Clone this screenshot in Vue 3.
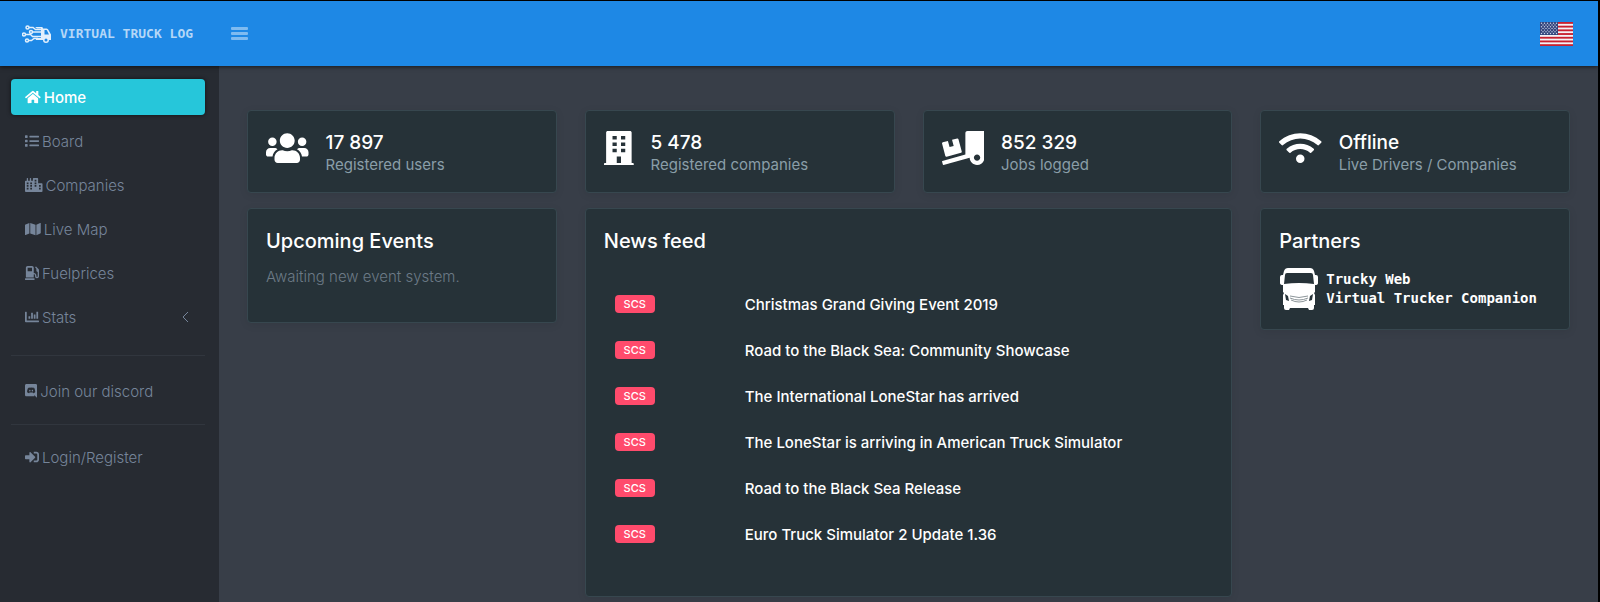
<template>
  <div class="app">
    <header class="topbar">
      <a href="#" class="brand">
        <svg class="brand-logo" viewBox="0 0 60 36" aria-hidden="true">
          <g fill="none" stroke="currentColor" stroke-width="3">
            <path d="M14 5h8l5 4h12M20 14h19M8 19h9l4 4h19M14 31h5l5-4h8" />
            <circle cx="11" cy="5" r="3" />
            <circle cx="18" cy="14" r="3" />
            <circle cx="4" cy="19" r="3" />
            <circle cx="10" cy="31" r="3" />
          </g>
          <path
            fill="currentColor"
            fill-rule="evenodd"
            d="M26 4h14q2 0 2 3h7q3 0 4 3l5 9v11h-4a6 6 0 0 1-12 0H28v-4h10V7H30zM45 10v9h9l-4-8-1-1zM48 27a3 3 0 1 0 0 6 3 3 0 1 0 0-6z"
          />
        </svg>
        <span class="brand-name">VIRTUAL TRUCK LOG</span>
      </a>
      <button type="button" class="menu-toggle" aria-label="Toggle menu" @click="collapsed = !collapsed">
        <span></span>
        <span></span>
        <span></span>
      </button>
      <button type="button" class="language" aria-label="Language">
        <svg viewBox="0 0 33 24" aria-hidden="true">
          <rect width="33" height="24" fill="#f4f2f6" />
          <rect v-for="n in 7" :key="n" :y="(n - 1) * 3.7" width="33" height="1.85" fill="#c8202f" />
          <rect width="18" height="13" fill="#33457c" />
          <g fill="#c9d0e2">
            <circle v-for="star in stars" :key="star.id" :cx="star.x" :cy="star.y" r="0.7" />
          </g>
        </svg>
      </button>
    </header>

    <div class="body">
      <nav v-show="!collapsed" class="sidebar">
        <ul>
          <li v-for="item in menu" :key="item.text" :class="item.divider">
            <a href="#" class="nav-link" :class="{ active: item.active }">
              <svg class="nav-icon" :viewBox="icons[item.icon].box" aria-hidden="true">
                <path fill-rule="evenodd" :d="icons[item.icon].path" />
              </svg>
              <span>{{ item.text }}</span>
              <svg v-if="item.children" class="chevron" viewBox="0 0 8 12" aria-hidden="true">
                <path d="M7 1L2 6l5 5" />
              </svg>
            </a>
          </li>
        </ul>
      </nav>

      <main class="content">
        <section v-for="stat in stats" :key="stat.label" class="card stat">
          <svg class="stat-icon" :viewBox="icons[stat.icon].box" aria-hidden="true">
            <path fill-rule="evenodd" :d="icons[stat.icon].path" />
          </svg>
          <div>
            <p class="stat-value">{{ stat.value }}</p>
            <p class="stat-label">{{ stat.label }}</p>
          </div>
        </section>

        <section class="card events">
          <h2>Upcoming Events</h2>
          <p>Awaiting new event system.</p>
        </section>

        <section class="card news">
          <h2>News feed</h2>
          <table>
            <tbody>
              <tr v-for="title in news" :key="title">
                <td class="source"><span class="badge">SCS</span></td>
                <td><a href="#">{{ title }}</a></td>
              </tr>
            </tbody>
          </table>
        </section>

        <section class="card partners">
          <h2>Partners</h2>
          <a href="#" class="partner">
            <svg viewBox="0 0 38 42" aria-hidden="true">
              <path
                fill-rule="evenodd"
                d="M8 0h22q3 0 4 3l1 4h1q2 0 2 2v6q0 2-3 2v7l-1 1 1 2v10h-1v3q0 2-2 2h-3l-1-2H10l-1 2H6q-2 0-2-2v-3H3V27l1-2-1-1v-7q-3 0-3-2V9q0-2 2-2h1l1-4q1-3 4-3zM7 5Q5 5 5 7L4 16q15-2 30 0L33 7q0-2-2-2zM5 26l3 2 1 5-3-1zM33 26l-3 2-1 5 3-1z"
              />
              <path class="grille" d="M10 28q9 3 18 0M10 30q9 4 18 0M11 32q8 4 16 0" />
            </svg>
            <span>Trucky Web<br />Virtual Trucker Companion</span>
          </a>
        </section>
      </main>
    </div>
  </div>
</template>

<script setup>
import { ref } from 'vue'

const collapsed = ref(false)

const menu = [
  { text: 'Home', icon: 'home', active: true },
  { text: 'Board', icon: 'list' },
  { text: 'Companies', icon: 'city' },
  { text: 'Live Map', icon: 'map' },
  { text: 'Fuelprices', icon: 'fuel' },
  { text: 'Stats', icon: 'chart', children: true },
  { text: 'Join our discord', icon: 'discord', divider: 'divider' },
  { text: 'Login/Register', icon: 'login', divider: 'divider compact' }
]

const stats = [
  { value: '17 897', label: 'Registered users', icon: 'users' },
  { value: '5 478', label: 'Registered companies', icon: 'building' },
  { value: '852 329', label: 'Jobs logged', icon: 'loading' },
  { value: 'Offline', label: 'Live Drivers / Companies', icon: 'wifi' }
]

const news = [
  'Christmas Grand Giving Event 2019',
  'Road to the Black Sea: Community Showcase',
  'The International LoneStar has arrived',
  'The LoneStar is arriving in American Truck Simulator',
  'Road to the Black Sea Release',
  'Euro Truck Simulator 2 Update 1.36'
]

// rows alternate between six and five stars
const stars = []
for (let row = 0; row < 7; row++) {
  const count = row % 2 ? 5 : 6
  for (let col = 0; col < count; col++) {
    stars.push({
      id: `${row}-${col}`,
      x: (row % 2 ? 3 : 1.5) + col * 3,
      y: 1.3 + row * 1.7
    })
  }
}

const icons = {
  home: {
    box: '0 0 576 512',
    path: 'M280.37 148.26L96 300.11V464a16 16 0 0 0 16 16l112.06-.29a16 16 0 0 0 15.92-16V368a16 16 0 0 1 16-16h64a16 16 0 0 1 16 16v95.64a16 16 0 0 0 16 16.05L464 480a16 16 0 0 0 16-16V300L295.67 148.26a12.19 12.19 0 0 0-15.3 0zM571.6 251.47L488 182.56V44.05a12 12 0 0 0-12-12h-56a12 12 0 0 0-12 12v72.61L318.47 43a48 48 0 0 0-61 0L4.34 251.47a12 12 0 0 0-1.6 16.9l25.5 31A12 12 0 0 0 45.15 301l235.22-193.74a12.19 12.19 0 0 1 15.3 0L530.9 301a12 12 0 0 0 16.9-1.6l25.5-31a12 12 0 0 0-1.7-16.93z'
  },
  list: {
    box: '0 0 512 512',
    path: 'M80 368H16a16 16 0 0 0-16 16v64a16 16 0 0 0 16 16h64a16 16 0 0 0 16-16v-64a16 16 0 0 0-16-16zm0-320H16A16 16 0 0 0 0 64v64a16 16 0 0 0 16 16h64a16 16 0 0 0 16-16V64a16 16 0 0 0-16-16zm0 160H16a16 16 0 0 0-16 16v64a16 16 0 0 0 16 16h64a16 16 0 0 0 16-16v-64a16 16 0 0 0-16-16zm416 176H176a16 16 0 0 0-16 16v32a16 16 0 0 0 16 16h320a16 16 0 0 0 16-16v-32a16 16 0 0 0-16-16zm0-320H176a16 16 0 0 0-16 16v32a16 16 0 0 0 16 16h320a16 16 0 0 0 16-16V80a16 16 0 0 0-16-16zm0 160H176a16 16 0 0 0-16 16v32a16 16 0 0 0 16 16h320a16 16 0 0 0 16-16v-32a16 16 0 0 0-16-16z'
  },
  city: {
    box: '0 0 640 512',
    path: 'M616 192H480V24c0-13.26-10.74-24-24-24H312c-13.26 0-24 10.74-24 24v72h-64V16c0-8.84-7.16-16-16-16h-16c-8.84 0-16 7.16-16 16v80h-64V16c0-8.84-7.16-16-16-16H80c-8.84 0-16 7.16-16 16v80H24c-13.26 0-24 10.74-24 24v360c0 17.67 14.33 32 32 32h576c17.67 0 32-14.33 32-32V216c0-13.26-10.75-24-24-24zM64 160h64v64H64zM64 256h64v64H64zM64 352h64v64H64zM192 160h64v64h-64zM192 256h64v64h-64zM192 352h64v64h-64zM352 64h64v64h-64zM352 160h64v64h-64zM352 256h64v64h-64zM512 256h64v64h-64zM512 352h64v64h-64z'
  },
  map: {
    box: '0 0 576 512',
    path: 'M0 117.66v346.32c0 11.32 11.43 19.06 21.94 14.86L160 416V32L20.12 87.95A32.006 32.006 0 0 0 0 117.66zM192 416l192 64V96L192 32v384zM554.06 33.16L416 96v384l139.88-55.95A31.996 31.996 0 0 0 576 394.34V48.02c0-11.32-11.43-19.06-21.94-14.86z'
  },
  fuel: {
    box: '0 0 512 512',
    path: 'M336 448H16c-8.8 0-16 7.2-16 16v32c0 8.8 7.2 16 16 16h320c8.8 0 16-7.2 16-16v-32c0-8.8-7.2-16-16-16zm157.2-340.7l-81-81c-6.2-6.2-16.4-6.2-22.6 0l-11.3 11.3c-6.2 6.2-6.2 16.4 0 22.6L416 97.9V160c0 28.1 20.9 51.3 48 55.2V376c0 13.2-10.8 24-24 24s-24-10.8-24-24v-32c0-48.6-39.4-88-88-88h-8V64c0-35.3-28.7-64-64-64H96C60.7 0 32 28.7 32 64v352h288V304h8c22.1 0 40 17.9 40 40v27.8c0 37.7 27 72 64.5 75.9 43 4.3 79.5-29.5 79.5-71.7V152.6c0-17-6.8-33.3-18.8-45.3zM256 192H96V64h160v128z'
  },
  chart: {
    box: '0 0 512 512',
    path: 'M332.8 320h38.4c6.4 0 12.8-6.4 12.8-12.8V172.8c0-6.4-6.4-12.8-12.8-12.8h-38.4c-6.4 0-12.8 6.4-12.8 12.8v134.4c0 6.4 6.4 12.8 12.8 12.8zm96 0h38.4c6.4 0 12.8-6.4 12.8-12.8V76.8c0-6.4-6.4-12.8-12.8-12.8h-38.4c-6.4 0-12.8 6.4-12.8 12.8v230.4c0 6.4 6.4 12.8 12.8 12.8zm-288 0h38.4c6.4 0 12.8-6.4 12.8-12.8v-70.4c0-6.4-6.4-12.8-12.8-12.8h-38.4c-6.4 0-12.8 6.4-12.8 12.8v70.4c0 6.4 6.4 12.8 12.8 12.8zm96 0h38.4c6.4 0 12.8-6.4 12.8-12.8V108.8c0-6.4-6.4-12.8-12.8-12.8h-38.4c-6.4 0-12.8 6.4-12.8 12.8v198.4c0 6.4 6.4 12.8 12.8 12.8zM496 384H64V80c0-8.84-7.16-16-16-16H16C7.16 64 0 71.16 0 80v336c0 17.67 14.33 32 32 32h464c8.84 0 16-7.16 16-16v-32c0-8.84-7.16-16-16-16z'
  },
  discord: {
    box: '0 0 448 512',
    path: 'M297.216 243.2c0 15.616-11.52 28.416-26.112 28.416-14.336 0-26.112-12.8-26.112-28.416s11.52-28.416 26.112-28.416c14.592 0 26.112 12.8 26.112 28.416zm-119.552-28.416c-14.592 0-26.112 12.8-26.112 28.416s11.776 28.416 26.112 28.416c14.592 0 26.112-12.8 26.112-28.416.256-15.616-11.52-28.416-26.112-28.416zM448 52.736V512c-64.494-56.994-43.868-38.128-118.784-107.776l13.568 47.36H52.48C23.552 451.584 0 428.032 0 398.848V52.736C0 23.552 23.552 0 52.48 0h343.04C424.448 0 448 23.552 448 52.736zm-72.96 242.688c0-82.432-36.864-149.248-36.864-149.248-36.864-27.648-71.936-26.88-71.936-26.88l-3.584 4.096c43.52 13.312 63.744 32.512 63.744 32.512-60.811-33.329-132.244-33.335-191.232-7.424-9.472 4.352-15.104 7.424-15.104 7.424s21.248-20.224 67.328-33.536l-2.56-3.072s-35.072-.768-71.936 26.88c0 0-36.864 66.816-36.864 149.248 0 0 21.504 37.12 78.08 38.912 0 0 9.472-11.52 17.152-21.248-32.512-9.728-44.8-30.208-44.8-30.208 3.766 2.636 9.976 6.053 10.496 6.4 43.21 24.198 104.588 32.126 159.744 8.96 8.96-3.328 18.944-8.192 29.44-15.104 0 0-12.8 20.992-46.336 30.464 7.68 9.728 16.896 20.736 16.896 20.736 56.576-1.792 78.336-38.912 78.336-38.912z'
  },
  login: {
    box: '0 0 512 512',
    path: 'M416 448h-84c-6.6 0-12-5.4-12-12v-40c0-6.6 5.4-12 12-12h84c17.7 0 32-14.3 32-32V160c0-17.7-14.3-32-32-32h-84c-6.6 0-12-5.4-12-12V76c0-6.6 5.4-12 12-12h84c53 0 96 43 96 96v192c0 53-43 96-96 96zm-47-201L201 79c-15-15-41-4.5-41 17v96H24c-13.3 0-24 10.7-24 24v96c0 13.3 10.7 24 24 24h136v96c0 21.5 26 32 41 17l168-168c9.3-9.4 9.3-24.6 0-34z'
  },
  users: {
    box: '0 0 640 512',
    path: 'M96 224c35.3 0 64-28.7 64-64s-28.7-64-64-64-64 28.7-64 64 28.7 64 64 64zm448 0c35.3 0 64-28.7 64-64s-28.7-64-64-64-64 28.7-64 64 28.7 64 64 64zm32 32h-64c-17.6 0-33.5 7.1-45.1 18.6 40.3 22.1 68.9 62 75.1 109.4h66c17.7 0 32-14.3 32-32v-32c0-35.3-28.7-64-64-64zm-256 0c61.9 0 112-50.1 112-112S381.9 32 320 32 208 82.1 208 144s50.1 112 112 112zm76.8 32h-8.3c-20.8 10-43.9 16-68.5 16s-47.6-6-68.5-16h-8.3C179.6 288 128 339.6 128 403.2V432c0 26.5 21.5 48 48 48h288c26.5 0 48-21.5 48-48v-28.8c0-63.6-51.6-115.2-115.2-115.2zm-223.7-13.4C161.5 263.1 145.6 256 128 256H64c-35.3 0-64 28.7-64 64v32c0 17.7 14.3 32 32 32h65.9c6.3-47.4 34.9-87.3 75.2-109.4z'
  },
  building: {
    box: '0 0 448 512',
    path: 'M436 480h-20V24c0-13.255-10.745-24-24-24H56C42.745 0 32 10.745 32 24v456H12c-6.627 0-12 5.373-12 12v20h448v-20c0-6.627-5.373-12-12-12zM128 76h64v52h-64zM256 76h64v52h-64zM128 172h64v52h-64zM256 172h64v52h-64zM128 268h64v52h-64zM256 268h64v52h-64zM192 384h64v96h-64z'
  },
  loading: {
    box: '0 0 640 512',
    path: 'M50.2 375.6c2.3 8.5 11.1 13.6 19.6 11.3l216.4-58c8.5-2.3 13.6-11.1 11.3-19.6l-49.7-185.5c-2.3-8.5-11.1-13.6-19.6-11.3L151 133.3l24.8 92.7-61.8 16.5-24.8-92.7-77.3 20.7C3.4 172.8-1.7 181.6.6 190.1l49.6 185.5zM384 0c-17.7 0-32 14.3-32 32v323.6L5.9 450c-4.3 1.2-6.8 5.6-5.6 9.8l12.6 46.3c1.2 4.3 5.6 6.8 9.8 5.6l393.7-107.4C418.8 464.1 467.6 512 528 512c61.9 0 112-50.1 112-112V0H384zm144 448c-26.5 0-48-21.5-48-48s21.5-48 48-48 48 21.5 48 48-21.5 48-48 48z'
  },
  wifi: {
    box: '0 0 640 512',
    path: 'M634.91 154.88C457.74-8.99 182.19-8.93 5.09 154.88c-6.66 6.16-6.79 16.59-.35 22.98l34.24 33.97c6.14 6.1 16.02 6.23 22.4.38 145.92-133.68 371.3-133.71 517.25 0 6.38 5.85 16.26 5.71 22.4-.38l34.24-33.97c6.43-6.39 6.3-16.82-.36-22.98zM320 352c-35.35 0-64 28.65-64 64s28.65 64 64 64 64-28.65 64-64-28.65-64-64-64zm202.67-83.59c-115.26-101.93-290.21-101.82-405.34 0-6.9 6.1-7.12 16.69-.57 23.15l34.44 33.99c6 5.92 15.66 6.32 22.05.8 83.95-72.57 209.74-72.41 293.49 0 6.39 5.52 16.05 5.13 22.05-.8l34.44-33.99c6.56-6.46 6.33-17.06-.56-23.15z'
  }
}
</script>

<style>
body {
  margin: 0;
  background: #383e48;
}
</style>

<style scoped>
.app {
  box-sizing: border-box;
  min-height: 100vh;
  display: flex;
  flex-direction: column;
  border-top: 1px solid #000;
  border-right: 2px solid #000;
  font-family: Inter, "Noto Sans", sans-serif;
  font-size: 15px;
  color: #fff;
}

.app *,
.app *::before {
  box-sizing: border-box;
}

h2,
p,
ul {
  margin: 0;
  padding: 0;
}

a {
  color: inherit;
  text-decoration: none;
}

button {
  padding: 0;
  border: none;
  background: none;
  cursor: pointer;
}

svg {
  display: block;
  flex: none;
  fill: currentColor;
}

.topbar {
  position: relative;
  z-index: 1;
  display: flex;
  align-items: center;
  height: 65px;
  padding: 0 25px 0 22px;
  background: #1e88e5;
  box-shadow: 0 1px 4px rgba(0, 0, 0, 0.6);
}

.brand {
  display: flex;
  align-items: center;
  gap: 8px;
  color: #b4d7f7;
}

.brand-logo {
  width: 30px;
  height: 18px;
  color: #e2effc;
}

.brand-name {
  font-family: "DejaVu Sans Mono", monospace;
  font-size: 13px;
  font-weight: 700;
}

.menu-toggle {
  display: grid;
  gap: 2px;
  width: 17px;
  margin-left: 38px;
}

.menu-toggle span {
  height: 3px;
  border-radius: 1px;
  background: #7fbbf0;
}

.language {
  margin-left: auto;
}

.language svg {
  width: 33px;
  height: 24px;
}

.body {
  flex: 1;
  display: flex;
}

.sidebar {
  flex: none;
  width: 219px;
  padding: 13px 14px 14px 11px;
  background: #272b32;
}

.sidebar ul {
  display: grid;
  gap: 8px;
  list-style: none;
}

.divider {
  margin-top: 12px;
  padding-top: 17px;
  border-top: 1px solid #31363e;
}

.divider.compact {
  margin-top: 7px;
  padding-top: 14px;
}

.nav-link {
  display: flex;
  align-items: center;
  gap: 3px;
  height: 36px;
  padding: 0 16px 0 14px;
  border-radius: 4px;
  font-weight: 300;
  color: #76859a;
}

.nav-link.active {
  background: #26c6da;
  box-shadow: 0 0 4px rgba(0, 0, 0, 0.6);
  font-weight: 500;
  color: #fff;
}

.nav-icon {
  height: 14px;
}

.chevron {
  width: 8px;
  height: 12px;
  margin-left: auto;
  fill: none;
  stroke: currentColor;
}

.content {
  flex: 1;
  display: grid;
  grid-template-columns: repeat(4, minmax(0, 1fr));
  align-content: start;
  align-items: start;
  gap: 15px 28px;
  padding: 44px 28px 5px;
  background: #383e48;
}

.card {
  padding: 18px 18px 19px;
  border: 1px solid #37474f;
  border-radius: 4px;
  background: #263238;
  box-shadow: 0 2px 8px rgba(0, 0, 0, 0.08);
}

.card h2 {
  font-size: 20px;
  font-weight: 500;
  line-height: 28px;
}

.stat {
  display: flex;
  gap: 17px;
}

.stat-icon {
  height: 34px;
  margin-top: 2px;
}

.stat-value {
  font-size: 19px;
  font-weight: 500;
  line-height: 28px;
}

.stat-label {
  font-size: 15px;
  line-height: 16px;
  color: #8a9ea8;
}

.events p {
  margin: 12px 0 16px;
  font-size: 15px;
  font-weight: 300;
  line-height: 20px;
  color: #6c7a86;
}

.news {
  grid-column: span 2;
}

.news table {
  width: 100%;
  margin: 26px 0 20px;
  border-collapse: collapse;
}

.news td {
  height: 46px;
  padding: 0 11px;
  font-size: 15px;
  font-weight: 500;
}

.news .source {
  width: 130px;
}

.badge {
  display: block;
  width: 40px;
  border-radius: 4px;
  background: #ff4b6c;
  font-size: 11px;
  line-height: 18px;
  text-align: center;
}

.partner {
  display: flex;
  align-items: center;
  gap: 8px;
  height: 43px;
  margin-top: 12px;
  padding-left: 1px;
  font-family: "DejaVu Sans Mono", monospace;
  font-size: 14px;
  font-weight: 700;
  line-height: 19px;
}

.partner svg {
  width: 38px;
  height: 42px;
}

.grille {
  fill: none;
  stroke: #8d969a;
}

@media (max-width: 900px) {
  .content {
    grid-template-columns: repeat(2, minmax(0, 1fr));
  }
}
</style>
